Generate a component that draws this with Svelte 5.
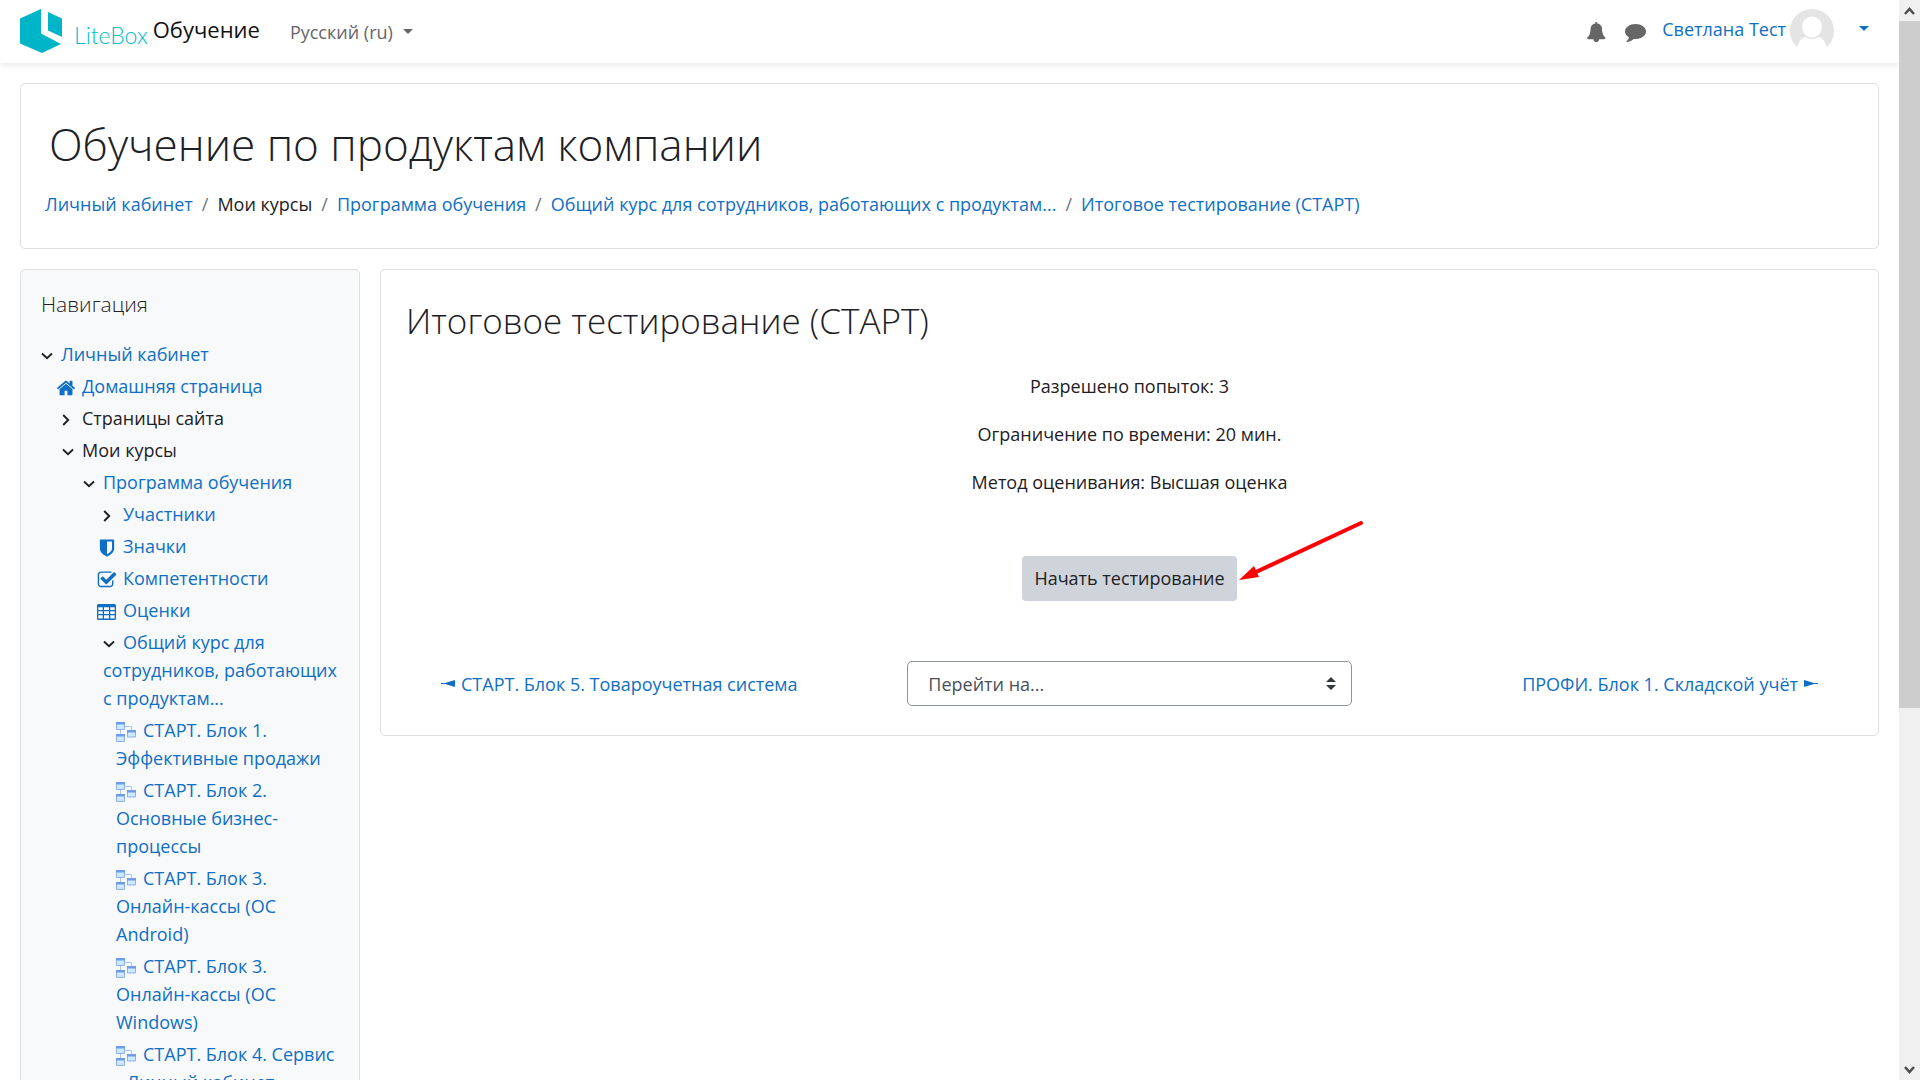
<script>
  const breadcrumbs = [
    { text: 'Личный кабинет', link: true },
    { text: 'Мои курсы', link: false },
    { text: 'Программа обучения', link: true },
    { text: 'Общий курс для сотрудников, работающих с продуктам...', link: true },
    { text: 'Итоговое тестирование (СТАРТ)', link: true }
  ];

  const tree = [
    { text: 'Личный кабинет', level: 0, icon: 'down', link: true },
    { text: 'Домашняя страница', level: 1, icon: 'home', link: true },
    { text: 'Страницы сайта', level: 1, icon: 'right', link: false },
    { text: 'Мои курсы', level: 1, icon: 'down', link: false },
    { text: 'Программа обучения', level: 2, icon: 'down', link: true },
    { text: 'Участники', level: 3, icon: 'right', link: true },
    { text: 'Значки', level: 3, icon: 'shield', link: true },
    { text: 'Компетентности', level: 3, icon: 'check', link: true },
    { text: 'Оценки', level: 3, icon: 'table', link: true },
    { text: 'Общий курс для сотрудников, работающих с продуктам...', level: 3, icon: 'down', link: true },
    { text: 'СТАРТ. Блок 1. Эффективные продажи', level: 4, icon: 'module', link: true },
    { text: 'СТАРТ. Блок 2. Основные бизнес-процессы', level: 4, icon: 'module', link: true },
    { text: 'СТАРТ. Блок 3. Онлайн-кассы (ОС Android)', level: 4, icon: 'module', link: true },
    { text: 'СТАРТ. Блок 3. Онлайн-кассы (ОС Windows)', level: 4, icon: 'module', link: true },
    { text: 'СТАРТ. Блок 4. Сервис - Личный кабинет', level: 4, icon: 'module', link: true }
  ];

  const facts = [
    'Разрешено попыток: 3',
    'Ограничение по времени: 20 мин.',
    'Метод оценивания: Высшая оценка'
  ];

  const glyphs = {
    home: 'M1472 992v480q0 26-19 45t-45 19h-384v-384h-256v384h-384q-26 0-45-19t-19-45v-480q0-1 .5-3t.5-3l575-474 575 474q1 2 1 6zm223-69l-62 74q-8 9-21 11h-3q-13 0-21-7l-692-577-692 577q-12 8-24 7-13-2-21-11l-62-74q-8-10-7-23.5t11-21.5l719-599q32-26 76-26t76 26l244 204v-195q0-14 9-23t23-9h192q14 0 23 9t9 23v408l219 182q10 8 11 21.5t-7 23.5z',
    shield: 'M1344 960v-640h-448v1137q119-63 213-137 235-184 235-360zm192-768v768q0 86-33.5 170.5t-83 150-118 127.5-126.5 103-121 77.5-89.5 49.5-42.5 20q-12 6-26 6t-26-6q-16-7-42.5-20t-89.5-49.5-121-77.5-126.5-103-118-127.5-83-150-33.5-170.5v-768q0-26 19-45t45-19h1152q26 0 45 19t19 45z',
    check: 'M1472 930v318q0 119-84.5 203.5t-203.5 84.5h-832q-119 0-203.5-84.5t-84.5-203.5v-832q0-119 84.5-203.5t203.5-84.5h832q63 0 117 25 15 7 18 23 3 17-9 29l-49 49q-10 10-23 10-3 0-9-2-23-6-45-6h-832q-66 0-113 47t-47 113v832q0 66 47 113t113 47h832q66 0 113-47t47-113v-254q0-13 9-22l64-64q10-10 23-10 6 0 12 3 20 8 20 29zm231-489l-814 814q-24 24-57 24t-57-24l-430-430q-24-24-24-57t24-57l110-110q24-24 57-24t57 24l263 263 647-647q24-24 57-24t57 24l110 110q24 24 24 57t-24 57z'
  };
</script>

{#snippet treeIcon(name)}
  <span class="icon {name}">
    {#if name === 'down'}
      <svg width="12" height="8" viewBox="0 0 12 8"><path d="M1 1.5 6 6.2 11 1.5" fill="none" stroke="#1d2125" stroke-width="1.9" /></svg>
    {:else if name === 'right'}
      <svg width="8" height="12" viewBox="0 0 8 12"><path d="M1.2 1 6.2 6 1.2 11" fill="none" stroke="#1d2125" stroke-width="1.9" /></svg>
    {:else if name === 'table'}
      <svg width="19" height="16" viewBox="0 0 19 16">
        <path fill="#0f6fc5" fill-rule="evenodd" d="M1.5 0h16A1.5 1.5 0 0 1 19 1.500v13a1.500 1.500 0 0 1-1.500 1.500h-16A1.500 1.500 0 0 1 0 14.500v-13A1.500 1.500 0 0 1 1.500 0zM1.300 3.300v2.700h4.400V3.300zm5.700 0v2.700h5V3.300zm6.300 0v2.700h4.400V3.300zM1.300 7.300v2.700h4.400V7.300zm5.700 0v2.700h5V7.300zm6.300 0v2.700h4.400V7.300zM1.300 11.300v3.200h4.400v-3.200zm5.700 0v3.200h5v-3.200zm6.300 0v3.200h4.400v-3.200z" />
      </svg>
    {:else if name === 'module'}
      <svg width="20" height="20" viewBox="0 0 20 20">
        <path d="M4.500 8v4M9 4.500h6.500V8" fill="none" stroke="#a9c6ee" stroke-width="1" />
        <g fill="#cbe8fc" stroke="#8fb0ec" stroke-width="1">
          <path d="M.5.5h8v7h-8z" /><path d="M.5 12.500h8v7h-8z" /><path d="M11.500 8.500h8v6.500h-8z" />
        </g>
        <path fill="#6f9bec" d="M0 0h9v2.500H0zM0 12h9v2.500H0zM11 8h9v2.500h-9z" />
      </svg>
    {:else}
      <svg width="20" height="20" viewBox="0 0 1792 1792"><path d={glyphs[name]} fill="#0f6fc5" /></svg>
    {/if}
  </span>
{/snippet}

<div class="window">
  <div class="page">
    <header class="topbar">
      <a class="brand" href="#home">
        <svg width="42" height="44" viewBox="0 0 42 44" aria-hidden="true">
          <path fill="#00b5c8" d="M21 0v24.500L41 35 22 44 0 34.500V9.500z" />
          <path fill="#00b5c8" d="M28 3 42 9.500V28L28 21.500z" />
        </svg>
        <span class="logo-text">LiteBox</span>
        <span class="site">Обучение</span>
      </a>
      <button class="language" type="button">Русский (ru)<span class="caret"></span></button>
      <div class="user-area">
        <button class="tool" type="button" aria-label="Уведомления">
          <svg width="20" height="20" viewBox="0 0 1792 1792"><path fill="#666" d="M1664 1408q0 52-38 90t-90 38h-448q0 106-75 181t-181 75-181-75-75-181h-448q-52 0-90-38t-38-90q50-42 91-88t85-119.500 74.500-158.500 50-206 19.500-260q0-152 117-282.500t307-158.500q-8-19-8-39 0-40 28-68t68-28 68 28 28 68q0 20-8 39 190 28 307 158.500t117 282.500q0 139 19.500 260t50 206 74.500 158.500 85 119.500 91 88z" /></svg>
        </button>
        <button class="tool" type="button" aria-label="Сообщения">
          <svg width="21" height="21" viewBox="0 0 1792 1792"><path fill="#666" d="M1792 896q0 174-120 321.500t-326 233-450 85.500q-70 0-145-8-198 175-460 242-49 14-114 22-17 2-30.500-9t-17.500-29v-1q-3-4-.5-12t2-10 4.500-9.500l6-9 7-8.500 8-9q7-8 31-34.500t34.500-38 31-39.500 32.500-51 27-59 26-76q-157-89-247.500-220t-90.500-281q0-130 71-248.500t191-204.500 286-136.500 348-50.500 348 50.500 286 136.500 191 204.500 71 248.500z" /></svg>
        </button>
        <button class="user" type="button">
          <span>Светлана Тест</span>
          <svg width="44" height="44" viewBox="0 0 44 44" aria-hidden="true">
            <path fill="#e4e4e4" d="M8 39A22 22 0 1 1 36 39z" />
            <path fill="#fff" d="M7 40C8 32 13 27 19 27h6c6 0 11 5 12 13z" />
            <ellipse cx="22" cy="18" rx="11" ry="12" fill="#e4e4e4" />
            <ellipse cx="22" cy="18" rx="10" ry="10.500" fill="#fff" />
          </svg>
          <span class="caret"></span>
        </button>
      </div>
    </header>

    <div class="content">
      <section class="card heading">
        <h1>Обучение по продуктам компании</h1>
        <nav aria-label="Навигационная цепочка">
          <ol>
            {#each breadcrumbs as crumb}
              <li>{#if crumb.link}<a href="#crumb">{crumb.text}</a>{:else}{crumb.text}{/if}</li>
            {/each}
          </ol>
        </nav>
      </section>

      <div class="columns">
        <aside class="card sidebar">
          <h5>Навигация</h5>
          <ul>
            {#each tree as item}
              <li class="level{item.level}">
                {#if item.link}
                  <a href="#item">{@render treeIcon(item.icon)}{item.text}</a>
                {:else}
                  {@render treeIcon(item.icon)}{item.text}
                {/if}
              </li>
            {/each}
          </ul>
        </aside>

        <main class="card main">
          <h2>Итоговое тестирование (СТАРТ)</h2>
          {#each facts as fact}
            <p>{fact}</p>
          {/each}
          <div class="start">
            <button type="button">
              Начать тестирование
              <svg class="pointer" width="126" height="64" viewBox="0 0 126 64" aria-hidden="true">
                <path d="M123 4 18 53" stroke="#f00" stroke-width="4" stroke-linecap="round" />
                <path d="M1 61 16 47 21 58z" fill="#f00" />
              </svg>
            </button>
          </div>
          <div class="activity-nav">
            <a href="#prev">
              <svg width="14" height="7" viewBox="0 0 14 7" aria-hidden="true"><path fill="#0f6fc5" d="M0 3h4l10-3v7L4 4H0z" /></svg>
              СТАРТ. Блок 5. Товароучетная система
            </a>
            <div class="jump">
              <select aria-label="Перейти на..."><option>Перейти на...</option></select>
              <svg width="10" height="13" viewBox="0 0 10 13" aria-hidden="true"><path fill="#343a40" d="M5 0l5 5H0zM5 13l5-5H0z" /></svg>
            </div>
            <a class="next" href="#next">
              ПРОФИ. Блок 1. Складской учёт
              <svg width="14" height="7" viewBox="0 0 14 7" aria-hidden="true"><path fill="#0f6fc5" d="M14 3h-4L0 0v7l10-3h4z" /></svg>
            </a>
          </div>
        </main>
      </div>
    </div>
  </div>

  <div class="scrollbar">
    <button type="button" aria-label="Вверх"><svg width="11" height="8" viewBox="0 0 11 8"><path d="M1 7 5.500 2 10 7" fill="none" stroke="#505050" stroke-width="2.600" /></svg></button>
    <div class="track"><div class="thumb"></div></div>
    <button type="button" aria-label="Вниз"><svg width="11" height="8" viewBox="0 0 11 8"><path d="M1 1 5.500 6 10 1" fill="none" stroke="#505050" stroke-width="2.600" /></svg></button>
  </div>
</div>

<style>
  :global(body) {
    background: #fff;
  }
  .window {
    display: flex;
    height: 100vh;
    overflow: hidden;
    font: 400 18px/28px 'Open Sans', 'Noto Sans', sans-serif;
    color: #1d2125;
  }
  .window * {
    box-sizing: border-box;
  }
  .page {
    flex: 1;
    min-width: 0;
    overflow: hidden;
  }
  a {
    color: #0f6fc5;
    text-decoration: none;
  }
  button,
  select {
    font: inherit;
    color: inherit;
    border: 0;
    background: none;
    padding: 0;
  }
  svg {
    display: block;
  }
  .caret {
    border: 5px solid transparent;
    border-top-color: currentColor;
    border-bottom: 0;
  }

  .topbar {
    display: flex;
    align-items: center;
    height: 63px;
    padding: 0 30px 2px 20px;
    box-shadow: 0 3px 6px rgba(0, 0, 0, 0.08);
  }
  .brand {
    display: flex;
    align-items: center;
  }
  .logo-text {
    margin-left: 12px;
    padding-top: 8px;
    font: 300 23px/28px Lato, sans-serif;
    color: #00bcd0;
  }
  .site {
    margin-left: 5px;
    padding-bottom: 4px;
    font-size: 22px;
    color: #111;
  }
  .language {
    display: flex;
    align-items: center;
    gap: 10px;
    margin-left: 30px;
    padding-top: 2px;
    color: #666;
  }
  .user-area {
    display: flex;
    align-items: center;
    margin-left: auto;
  }
  .tool {
    margin-right: 18px;
    padding-top: 2px;
  }
  .user {
    display: flex;
    align-items: center;
    margin-left: -2px;
    color: #0f6fc5;
  }
  .user svg {
    margin: 0 25px 0 4px;
  }
  .user span {
    margin-bottom: 4px;
  }

  .content {
    padding: 20px;
  }
  .card {
    border: 1px solid #dfdfdf;
    border-radius: 5px;
  }
  .heading {
    padding: 24px;
    height: 166px;
  }
  h1,
  h2,
  h5 {
    margin: 0;
    font-weight: 300;
  }
  h1 {
    padding-left: 4px;
    font-size: 44px;
    line-height: 72px;
  }
  ol {
    display: flex;
    margin: 10px 0 0;
    padding: 0;
    list-style: none;
  }
  ol li + li::before {
    content: '/';
    padding: 0 9px;
    color: #6c757d;
  }
  .columns {
    display: flex;
    align-items: flex-start;
    gap: 20px;
    margin-top: 20px;
  }
  .sidebar {
    flex: 0 0 340px;
    padding: 20px;
    background: #f8f9fa;
  }
  h5 {
    font-size: 21px;
    line-height: 28px;
  }
  ul {
    margin: 20px 0 0;
    padding: 0;
    list-style: none;
  }
  ul li {
    padding: 2px 0;
  }
  .level1 {
    padding-left: 21px;
  }
  .level2 {
    padding-left: 42px;
  }
  .level3 {
    padding-left: 62px;
  }
  .level4 {
    padding-left: 75px;
  }
  .icon {
    display: inline-flex;
    align-items: center;
    width: 20px;
    height: 20px;
    vertical-align: middle;
  }
  .home,
  .shield,
  .check,
  .table {
    width: 26px;
    margin-left: -6px;
  }
  .module {
    width: 27px;
  }

  .main {
    flex: 1;
    min-width: 0;
    padding: 25px;
    text-align: center;
  }
  h2 {
    margin-bottom: 25px;
    font-size: 35px;
    line-height: 52px;
    text-align: left;
  }
  p {
    margin: 0 0 20px;
  }
  .start {
    margin: 60px 0;
  }
  .start button {
    position: relative;
    padding: 8px 12px;
    line-height: 29px;
    border-radius: 4px;
    background: #ced4da;
  }
  .pointer {
    position: absolute;
    left: calc(100% + 1px);
    bottom: 18px;
    fill: none;
  }
  .activity-nav {
    display: grid;
    grid-template-columns: repeat(3, 1fr);
    align-items: center;
    margin-bottom: 4px;
  }
  .activity-nav > a {
    display: flex;
    align-items: center;
    gap: 6px;
    padding: 0 35px;
  }
  .activity-nav > .next {
    justify-content: flex-end;
  }
  .jump {
    display: grid;
    align-items: center;
    padding: 0 19px;
  }
  .jump > * {
    grid-area: 1 / 1;
  }
  .jump svg {
    justify-self: end;
    margin-right: 16px;
    pointer-events: none;
  }
  select {
    appearance: none;
    width: 100%;
    height: 45px;
    padding: 0 20px;
    border: 1px solid #8f959e;
    border-radius: 5px;
    color: #495057;
  }

  .scrollbar {
    display: flex;
    flex-direction: column;
    width: 21px;
    background: #f0f0f0;
  }
  .scrollbar button {
    display: grid;
    place-items: center;
    height: 21px;
  }
  .track {
    flex: 1;
  }
  .thumb {
    height: 66.2%;
    background: #cdcdcd;
  }
</style>
